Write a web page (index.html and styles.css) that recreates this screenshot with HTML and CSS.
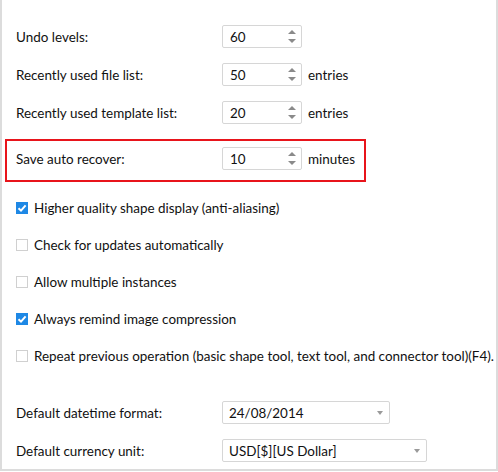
FILE: index.html
```html
<!DOCTYPE html>
<html>
<head>
<meta charset="utf-8">
<link rel="stylesheet" href="styles.css">
</head>
<body>
<div class="panel">
  <div class="row">
    <span class="label">Undo levels:</span>
    <div class="spin"><span class="val">60</span><span class="arrows"><i class="up"></i><i class="down"></i></span></div>
  </div>
  <div class="row">
    <span class="label">Recently used file list:</span>
    <div class="spin"><span class="val">50</span><span class="arrows"><i class="up"></i><i class="down"></i></span></div>
    <span class="unit">entries</span>
  </div>
  <div class="row">
    <span class="label">Recently used template list:</span>
    <div class="spin"><span class="val">20</span><span class="arrows"><i class="up"></i><i class="down"></i></span></div>
    <span class="unit">entries</span>
  </div>
  <div class="highlight">
    <div class="row inner">
      <span class="label">Save auto recover:</span>
      <div class="spin"><span class="val">10</span><span class="arrows"><i class="up"></i><i class="down"></i></span></div>
      <span class="unit">minutes</span>
    </div>
  </div>

  <div class="checks">
    <div class="check"><span class="box on"><svg viewBox="0 0 12 12" width="12" height="12"><path d="M2.5 6.2 L5 8.6 L9.6 3.4" fill="none" stroke="#fff" stroke-width="2"/></svg></span>Higher quality shape display (anti-aliasing)</div>
    <div class="check"><span class="box"></span>Check for updates automatically</div>
    <div class="check"><span class="box"></span>Allow multiple instances</div>
    <div class="check"><span class="box on"><svg viewBox="0 0 12 12" width="12" height="12"><path d="M2.5 6.2 L5 8.6 L9.6 3.4" fill="none" stroke="#fff" stroke-width="2"/></svg></span>Always remind image compression</div>
    <div class="check"><span class="box"></span>Repeat previous operation (basic shape tool, text tool, and connector tool)(F4).</div>
  </div>

  <div class="row sel-row">
    <span class="label">Default datetime format:</span>
    <div class="select w1"><span>24/08/2014</span><i class="caret"></i></div>
  </div>
  <div class="row sel-row">
    <span class="label">Default currency unit:</span>
    <div class="select w2"><span>USD[$][US Dollar]</span><i class="caret"></i></div>
  </div>
</div>
</body>
</html>
```
FILE: styles.css
```css
* { box-sizing: border-box; }
html, body { margin: 0; padding: 0; background: #fff; }
body {
  font-family: Lato, "Noto Sans", sans-serif;
  font-size: 13.45px;
  color: #111;
  white-space: nowrap;
}
.panel {
  width: 498px;
  height: 471px;
  border-left: 2px solid #dcdcdc;
  border-right: 2px solid #dcdcdc;
  border-bottom: 2px solid #dcdcdc;
  padding: 25px 0 0 14px;
}
.row {
  display: flex;
  align-items: center;
  height: 23px;
  margin-bottom: 15px;
}
.label { width: 206px; flex: none; }
.spin {
  width: 80px;
  height: 23px;
  border: 1px solid #d6d6d6;
  border-radius: 2px;
  display: flex;
  align-items: center;
  justify-content: space-between;
  padding: 0 5px 0 7px;
}
.arrows {
  display: flex;
  flex-direction: column;
  gap: 5px;
}
.up, .down { display: block; width: 0; height: 0; border-left: 4px solid transparent; border-right: 4px solid transparent; }
.up { border-bottom: 4px solid #8a8a8a; }
.down { border-top: 4px solid #8a8a8a; }
.unit { margin-left: 6px; }
.highlight {
  margin-left: -11px;
  width: 361px;
  height: 43px;
  border: 2px solid #e8141b;
  padding: 6px 0 0 9px;
}
.row.inner { margin-bottom: 0; }
.checks {
  padding-top: 16px;
}
.check {
  display: flex;
  align-items: center;
  height: 20px;
  margin-bottom: 17px;
}
.box {
  width: 12px;
  height: 12px;
  border: 1px solid #d0d0d0;
  margin-right: 6px;
  flex: none;
  display: flex;
}
.box.on { background: #1e88e5; border-color: #1e88e5; }
.box.on svg { margin: -1px; }
.sel-row { margin-bottom: 15px; }
.checks + .sel-row { margin-top: 35px; }
.select {
  height: 23px;
  border: 1px solid #d6d6d6;
  border-radius: 2px;
  display: flex;
  align-items: center;
  justify-content: space-between;
  padding: 0 6px 0 6px;
}
.w1 { width: 168px; }
.w2 { width: 205px; }
.caret { width: 0; height: 0; border-left: 3.5px solid transparent; border-right: 3.5px solid transparent; border-top: 4px solid #9a9a9a; }
```
